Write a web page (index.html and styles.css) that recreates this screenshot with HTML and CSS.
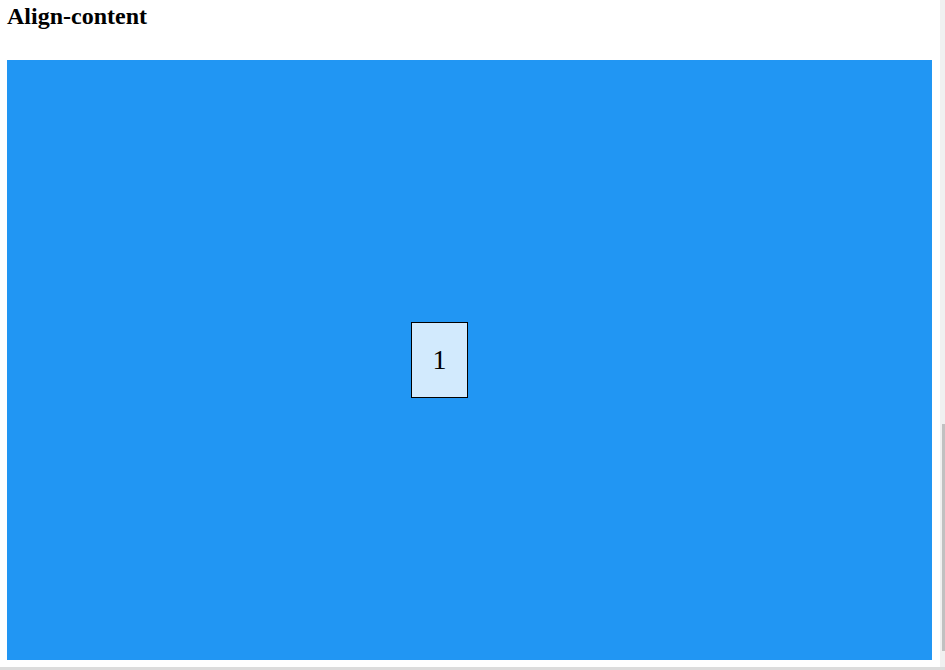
FILE: index.html
```html
<!DOCTYPE html>
<html>
<head>
<meta charset="utf-8">
<link rel="stylesheet" href="styles.css">
</head>
<body>
<div class="page">
  <h2 class="title">Align-content</h2>
  <div class="flex-container">
    <div class="item">1</div>
  </div>
</div>
<div class="vscroll"><div class="vthumb"></div></div>
<div class="hline"></div>
</body>
</html>
```
FILE: styles.css
```css
html, body {
  margin: 0;
  padding: 0;
  background: #ffffff;
  overflow: hidden;
}
.page {
  padding: 0 13px 0 7px;
  font-family: "Liberation Serif", "Times New Roman", serif;
}
.title {
  font-size: 24px;
  font-weight: bold;
  line-height: 28px;
  margin: 2px 0 30px 0;
  color: #000;
}
.flex-container {
  width: 925px;
  height: 600px;
  background: #2196f3;
  display: flex;
  flex-wrap: wrap;
  align-content: center;
  box-sizing: border-box;
  padding-left: 404px;
}
.item {
  background: rgba(255, 255, 255, 0.8);
  border: 1px solid #000;
  padding: 20px;
  font-size: 28px;
  line-height: 34px;
  text-align: center;
  width: 15px;
}
.vscroll {
  position: fixed;
  top: 0;
  right: 0;
  width: 5px;
  height: 667px;
  background: #f0f0f0;
}
.vthumb {
  position: absolute;
  left: 2px;
  right: 0;
  top: 424px;
  height: 227px;
  background: #c1c1c1;
}
.hline {
  position: fixed;
  left: 0;
  right: 0;
  bottom: 0;
  height: 3px;
  background: #dcdcdc;
}
```
